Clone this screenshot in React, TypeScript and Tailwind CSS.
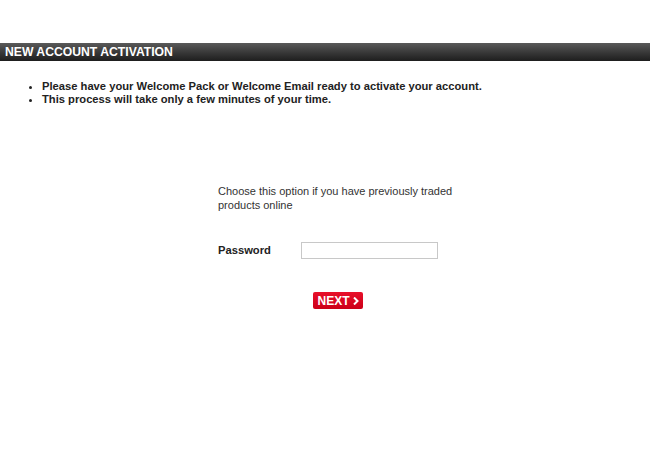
export default function App() {
  return (
    <main className="min-h-[462px] w-[650px] bg-white font-['Liberation_Sans',Arial,sans-serif] text-[12px]">
      <div className="h-[43px]" />
      {/* header bar */}
      <div className="flex h-[18px] items-center bg-gradient-to-b from-[#5a5a5a] via-[#3a3a3a] to-[#1e1e1e] pl-[5px]">
        <h1 className="text-[12.2px] font-bold leading-none text-white">NEW ACCOUNT ACTIVATION</h1>
      </div>

      <ul className="mt-[19px] list-disc pl-[42px] text-[11.2px] font-bold leading-[13px] text-[#222]">
        <li>Please have your Welcome Pack or Welcome Email ready to activate your account.</li>
        <li>This process will take only a few minutes of your time.</li>
      </ul>

      <div className="ml-[218px] mt-[78px] w-[250px]">
        <p className="text-[11px] leading-[14px] text-[#333]">
          Choose this option if you have previously traded products online
        </p>

        <div className="mt-[30px] flex items-center">
          <label className="w-[83px] text-[11.2px] font-bold text-[#222]">Password</label>
          <input
            type="password"
            className="h-[17px] w-[137px] border border-[#c8c8c8] bg-white outline-none"
          />
        </div>

        <div className="mt-[33px] pl-[95px]">
          <button className="flex h-[17px] w-[50px] items-center justify-center gap-[3px] rounded-[2px] bg-gradient-to-b from-[#e8102a] to-[#cc0018] text-[12px] font-bold leading-none text-white">
            NEXT
            <svg width="6" height="8" viewBox="0 0 6 8">
              <path d="M1 0.5 L4.5 4 L1 7.5" stroke="white" strokeWidth="2" fill="none" />
            </svg>
          </button>
        </div>
      </div>
    </main>
  );
}
